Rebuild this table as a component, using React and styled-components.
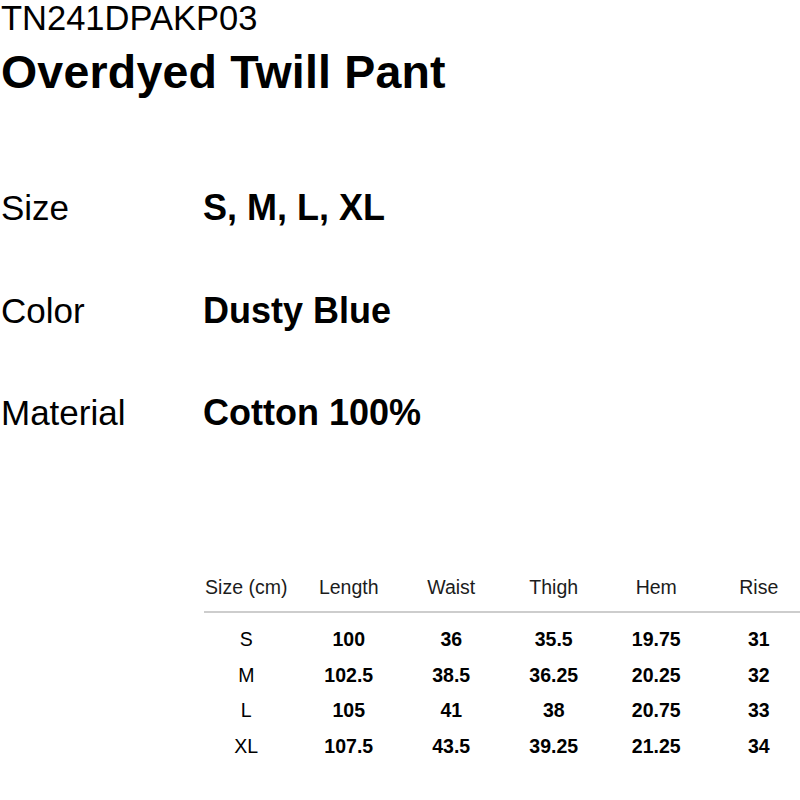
import React from 'react'
import styled, { createGlobalStyle } from 'styled-components'

const GlobalStyle = createGlobalStyle`
  html, body {
    margin: 0;
    padding: 0;
    background: #fff;
    overflow: hidden;
  }
  body {
    font-family: "Liberation Sans", Arial, Helvetica, sans-serif;
    color: #000;
  }
`

const specs = [
  { label: 'Size', value: 'S, M, L, XL' },
  { label: 'Color', value: 'Dusty Blue' },
  { label: 'Material', value: 'Cotton 100%' },
]

const columns = ['Size (cm)', 'Length', 'Waist', 'Thigh', 'Hem', 'Rise']

const rows = [
  ['S', '100', '36', '35.5', '19.75', '31'],
  ['M', '102.5', '38.5', '36.25', '20.25', '32'],
  ['L', '105', '41', '38', '20.75', '33'],
  ['XL', '107.5', '43.5', '39.25', '21.25', '34'],
]

const App = () => {
  return (
    <>
      <GlobalStyle />
      <Page>
        <Header>
          <Code>TN241DPAKP03</Code>
          <Title>Overdyed Twill Pant</Title>
        </Header>

        <Specs>
          {specs.map((s) => (
            <React.Fragment key={s.label}>
              <SpecLabel>{s.label}</SpecLabel>
              <SpecValue>{s.value}</SpecValue>
            </React.Fragment>
          ))}
        </Specs>

        <SizeTable>
          <Row $head>
            {columns.map((c) => (
              <Cell key={c}>{c}</Cell>
            ))}
          </Row>
          <Rule />
          <Body>
            {rows.map((r) => (
              <Row key={r[0]}>
                {r.map((v, i) => (
                  <Cell key={i} $bold={i > 0}>
                    {v}
                  </Cell>
                ))}
              </Row>
            ))}
          </Body>
        </SizeTable>
      </Page>
    </>
  )
}

const Page = styled.main`
  width: 800px;
  height: 800px;
  overflow: hidden;
  padding-left: 1px;
  box-sizing: border-box;
`

const Header = styled.header`
  display: flex;
  flex-direction: column;
  gap: 10px;
`

const Code = styled.div`
  font-size: 34.5px;
  line-height: 36px;
  font-weight: 400;
`

const Title = styled.h1`
  margin: 0;
  font-size: 46.5px;
  line-height: 52px;
  font-weight: 700;
  letter-spacing: 0.2px;
`

const Specs = styled.section`
  margin-top: 90px;
  display: grid;
  grid-template-columns: 202px auto;
  row-gap: 62.5px;
  line-height: 40px;
`

const SpecLabel = styled.div`
  font-size: 35px;
  font-weight: 400;
`

const SpecValue = styled.div`
  font-size: 36px;
  font-weight: 700;
`

const SizeTable = styled.section`
  margin-top: 142px;
  margin-left: 194px;
`

const Row = styled.div`
  display: grid;
  grid-template-columns: repeat(6, 102.5px);
  font-size: ${(p) => (p.$head ? '19.5px' : '19.5px')};
  line-height: ${(p) => (p.$head ? '24px' : '35.5px')};
  padding-bottom: ${(p) => (p.$head ? '12px' : '0')};
  color: ${(p) => (p.$head ? '#1c1c1c' : '#000')};
`

const Cell = styled.div`
  text-align: center;
  white-space: nowrap;
  font-weight: ${(p) => (p.$bold ? 700 : 400)};
`

const Rule = styled.div`
  margin-left: 9px;
  height: 2px;
  background: #cdcdcd;
`

const Body = styled.div`
  padding-top: 9px;
`

export default App
